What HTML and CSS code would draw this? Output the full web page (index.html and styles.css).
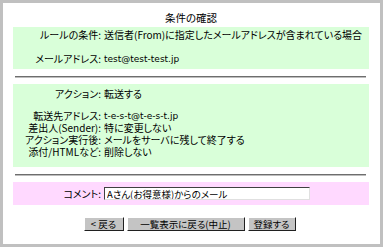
FILE: index.html
```html
<!DOCTYPE html>
<html lang="ja">
<head>
<meta charset="utf-8">
<link rel="stylesheet" href="styles.css">
</head>
<body>
<div class="frame">
  <div class="title">条件の確認</div>
  <div class="box green first">
    <div class="row"><span class="lbl">ルールの条件:</span><span class="val">送信者(From)に指定したメールアドレスが含まれている場合</span></div>
    <div class="row gap12"><span class="lbl">メールアドレス:</span><span class="val ascii">test@test-test.jp</span></div>
  </div>
  <div class="rule"></div>
  <div class="box green second">
    <div class="row"><span class="lbl">アクション:</span><span class="val">転送する</span></div>
    <div class="row gap10"><span class="lbl">転送先アドレス:</span><span class="val ascii">t-e-s-t@t-e-s-t.jp</span></div>
    <div class="row"><span class="lbl">差出人(Sender):</span><span class="val">特に変更しない</span></div>
    <div class="row"><span class="lbl">アクション実行後:</span><span class="val">メールをサーバに残して終了する</span></div>
    <div class="row"><span class="lbl">添付/HTMLなど:</span><span class="val">削除しない</span></div>
  </div>
  <div class="rule"></div>
  <div class="box pink">
    <div class="row"><span class="lbl">コメント:</span><span class="val"><input class="comment" type="text" value="Aさん(お得意様)からのメール"></span></div>
  </div>
  <div class="buttons">
    <button class="btn b1">&lt; 戻る</button>
    <button class="btn b2">一覧表示に戻る(中止)</button>
    <button class="btn b3">登録する</button>
  </div>
</div>
</body>
</html>
```
FILE: styles.css
```css
html, body {
  margin: 0;
  padding: 0;
}
body {
  background: #c0c0c0;
  padding: 3px;
  width: 383px;
  height: 247px;
  box-sizing: border-box;
  font-family: "Noto Sans CJK JP", "Noto Sans", sans-serif;
  font-size: 10px;
  font-feature-settings: "palt";
  color: #000;
}
.frame {
  background: #fff;
  height: 241px;
  padding: 0 11px 0 10px;
  box-sizing: border-box;
  overflow: hidden;
}
.title {
  text-align: center;
  line-height: 14px;
  padding-top: 8px;
  height: 24px;
  box-sizing: border-box;
  font-size: 10.5px;
}
.box {
  box-sizing: border-box;
}
.green {
  background: #d9ffd9;
}
.pink {
  background: #ffd9ff;
}
.first {
  height: 42px;
  padding-top: 2px;
}
.second {
  height: 83px;
  padding-top: 4px;
}
.pink {
  height: 23px;
  padding-top: 5px;
}
.row {
  display: flex;
  align-items: center;
  height: 12px;
  line-height: 12px;
  white-space: nowrap;
}
.gap12 { margin-top: 12px; }
.gap10 { margin-top: 10px; }
.lbl {
  width: 88px;
  text-align: right;
  flex: none;
}
.val {
  margin-left: 3px;
}
.ascii {
  font-family: "DejaVu Sans", sans-serif;
  font-size: 9px;
}
.rule {
  height: 0;
  border-top: 1px solid #6e6e6e;
  border-bottom: 1px solid #bdbdbd;
  margin: 7px 3px 6px 2px;
}
.pink .row {
  height: 13px;
}
.comment {
  width: 206px;
  height: 13px;
  box-sizing: border-box;
  margin: 0;
  padding: 0 2px;
  border: 1px solid;
  border-color: #404040 #e0e0e0 #e0e0e0 #404040;
  font-family: "Noto Sans CJK JP", sans-serif;
  font-feature-settings: "palt";
  font-size: 9.5px;
  line-height: 11px;
  background: #fff;
  color: #000;
}
.buttons {
  display: flex;
  justify-content: center;
  gap: 3px;
  margin-top: 12px;
  padding-right: 3px;
}
.btn {
  height: 14px;
  margin: 0;
  padding: 0;
  background: #c4c4c4;
  border: 1px solid;
  border-color: #ffffff #202020 #202020 #ffffff;
  font-family: "Noto Sans CJK JP", sans-serif;
  font-feature-settings: "palt";
  font-size: 9.5px;
  line-height: 12px;
  color: #000;
}
.b1 { width: 40px; }
.b2 { width: 118px; }
.b3 { width: 48px; }
```
